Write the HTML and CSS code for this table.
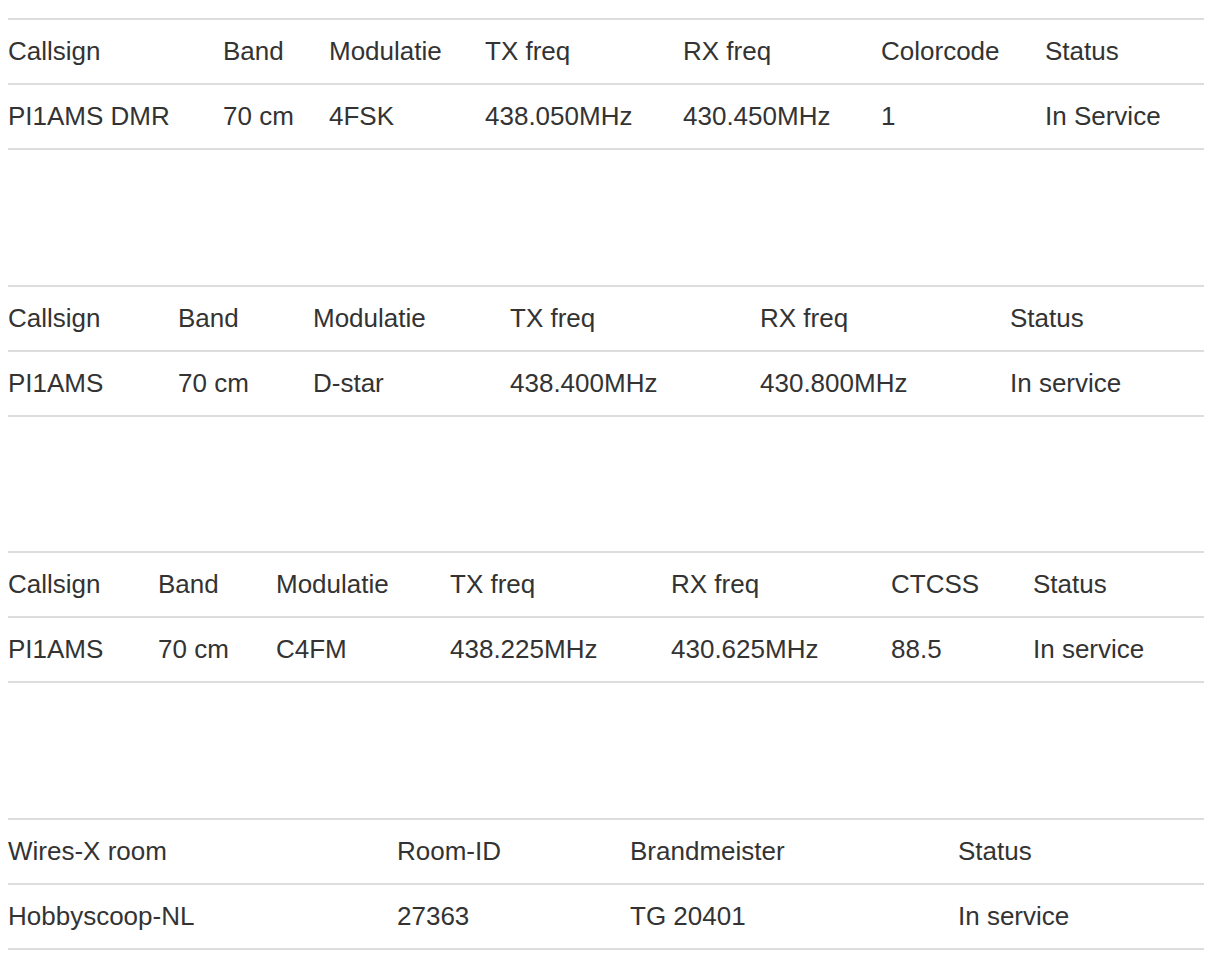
FILE: index.html
```html
<!DOCTYPE html>
<html lang="nl">
<head>
<meta charset="utf-8">
<title>Repeaters</title>
<link rel="stylesheet" href="styles.css">
</head>
<body>
<main class="page">
  <table class="rtable">
    <colgroup>
      <col class="w215"><col class="w106"><col class="w156"><col class="w198"><col class="w198"><col class="w164"><col>
    </colgroup>
    <tr><td>Callsign</td><td>Band</td><td>Modulatie</td><td>TX freq</td><td>RX freq</td><td>Colorcode</td><td>Status</td></tr>
    <tr><td>PI1AMS DMR</td><td>70 cm</td><td>4FSK</td><td>438.050MHz</td><td>430.450MHz</td><td>1</td><td>In Service</td></tr>
  </table>

  <table class="rtable">
    <colgroup>
      <col class="w170"><col class="w135"><col class="w197"><col class="w250"><col class="w250"><col>
    </colgroup>
    <tr><td>Callsign</td><td>Band</td><td>Modulatie</td><td>TX freq</td><td>RX freq</td><td>Status</td></tr>
    <tr><td>PI1AMS</td><td>70 cm</td><td>D-star</td><td>438.400MHz</td><td>430.800MHz</td><td>In service</td></tr>
  </table>

  <table class="rtable">
    <colgroup>
      <col class="w150"><col class="w118"><col class="w174"><col class="w221"><col class="w220"><col class="w142"><col>
    </colgroup>
    <tr><td>Callsign</td><td>Band</td><td>Modulatie</td><td>TX freq</td><td>RX freq</td><td>CTCSS</td><td>Status</td></tr>
    <tr><td>PI1AMS</td><td>70 cm</td><td>C4FM</td><td>438.225MHz</td><td>430.625MHz</td><td>88.5</td><td>In service</td></tr>
  </table>

  <table class="rtable">
    <colgroup>
      <col class="w389"><col class="w233"><col class="w328"><col>
    </colgroup>
    <tr><td>Wires-X room</td><td>Room-ID</td><td>Brandmeister</td><td>Status</td></tr>
    <tr><td>Hobbyscoop-NL</td><td>27363</td><td>TG 20401</td><td>In service</td></tr>
  </table>
</main>
</body>
</html>
```

FILE: styles.css
```css
html, body {
  margin: 0;
  padding: 0;
  background: #ffffff;
}

.page {
  padding: 18px 7px 0 8px;
  font-family: "Liberation Sans", Arial, sans-serif;
  font-size: 26px;
  color: #333333;
}

.rtable {
  width: 1196px;
  border-collapse: collapse;
  table-layout: fixed;
  margin-bottom: 134.67px;
}

.rtable:last-child {
  margin-bottom: 0;
}

.rtable td {
  height: 62px;
  padding: 0 8px 1px 0;
  border-top: 2px solid #dddddd;
  border-bottom: 2px solid #dddddd;
  vertical-align: middle;
  white-space: nowrap;
  line-height: 30px;
}

.w106 { width: 106px; }
.w118 { width: 118px; }
.w135 { width: 135px; }
.w142 { width: 142px; }
.w150 { width: 150px; }
.w156 { width: 156px; }
.w164 { width: 164px; }
.w170 { width: 170px; }
.w174 { width: 174px; }
.w197 { width: 197px; }
.w198 { width: 198px; }
.w215 { width: 215px; }
.w220 { width: 220px; }
.w221 { width: 221px; }
.w233 { width: 233px; }
.w250 { width: 250px; }
.w328 { width: 328px; }
.w389 { width: 389px; }
```
